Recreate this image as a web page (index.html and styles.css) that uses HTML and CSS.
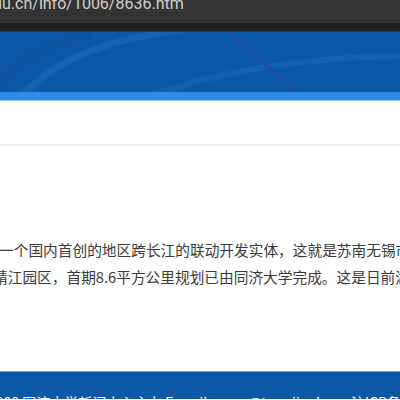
FILE: index.html
```html
<!DOCTYPE html>
<html lang="zh-CN">

<head>
    <meta charset="UTF-8">
    <meta name="viewport" content="width=device-width, initial-scale=1.0">
    <title>同济大学新闻网</title>
    <link rel="stylesheet" href="styles.css">
</head>

<body>
    <!-- 地址栏 -->
    <div class="addr-bar">
        <span class="url">du.cn/info/1006/8636.htm</span>
    </div>
    <div class="addr-shadow"></div>

    <!-- 顶部横幅 -->
    <div class="banner">
        <svg class="banner-art" width="400" height="61" viewBox="0 0 400 61">
            <path d="M-10 62 Q 20 20 90 0" stroke="#0f52a0" stroke-width="16" fill="none" opacity="0.6" />
            <path d="M22 64 Q 70 10 185 -2" stroke="#1a66b2" stroke-width="7" fill="none" opacity="0.7" />
            <path d="M150 64 Q 260 25 410 24" stroke="#1a66b2" stroke-width="6" fill="none" opacity="0.6" />
            <path d="M228 0 L 300 62" stroke="#1b4e9f" stroke-width="3" fill="none" opacity="0.8" />
        </svg>
    </div>
    <div class="nav-bar"></div>

    <div class="sub-bar"></div>

    <!-- 正文 -->
    <div class="article">
        <p class="line line-1">一个国内首创的地区跨长江的联动开发实体，这就是苏南无锡市</p>
        <p class="line line-2">靖江园区，首期8.6平方公里规划已由同济大学完成。这是日前湖</p>
    </div>

    <!-- 页脚 -->
    <div class="footer">
        <p class="footer-text">2008 同济大学新闻中心主办 E-mail: news@tongji.edu.cn 沪ICP备</p>
    </div>
</body>

</html>
```

FILE: styles.css
```css
* {
    margin: 0;
    padding: 0;
    box-sizing: border-box;
}

body {
    font-family: 'Noto Sans CJK SC', sans-serif;
    background-color: #ffffff;
    width: 400px;
    height: 400px;
    overflow: hidden;
}

.addr-bar {
    height: 23px;
    background-color: #333333;
    overflow: hidden;
}

.url {
    display: block;
    font-family: 'Roboto', sans-serif;
    font-size: 16px;
    line-height: 16px;
    color: #cfcfcf;
    margin-top: -4px;
    margin-left: -7px;
    white-space: nowrap;
}

.addr-shadow {
    height: 9px;
    background-color: #212121;
    border-bottom: 1px solid #2c3540;
}

.banner {
    height: 60px;
    background-color: #0b58a6;
    overflow: hidden;
}

.banner-art {
    display: block;
}

.nav-bar {
    height: 9px;
    background-color: #2b8de9;
    border-bottom: 1px solid #9ccaf4;
}

.sub-bar {
    height: 45px;
    border-bottom: 2px solid #ececec;
}

.article {
    padding-top: 90px;
    height: 225px;
    overflow: hidden;
}

.line {
    font-size: 14.7px;
    line-height: 27px;
    color: #3a3a3a;
    white-space: nowrap;
}

.line-1 {
    margin-left: -1px;
}

.line-2 {
    margin-left: -7px;
}

.footer {
    height: 28px;
    background-color: #0b58a6;
    border-top: 1px solid #7fa6d3;
    padding-top: 23px;
    overflow: hidden;
}

.footer-text {
    font-size: 14px;
    line-height: 14px;
    color: #ffffff;
    margin-left: -12px;
    white-space: nowrap;
}
```
